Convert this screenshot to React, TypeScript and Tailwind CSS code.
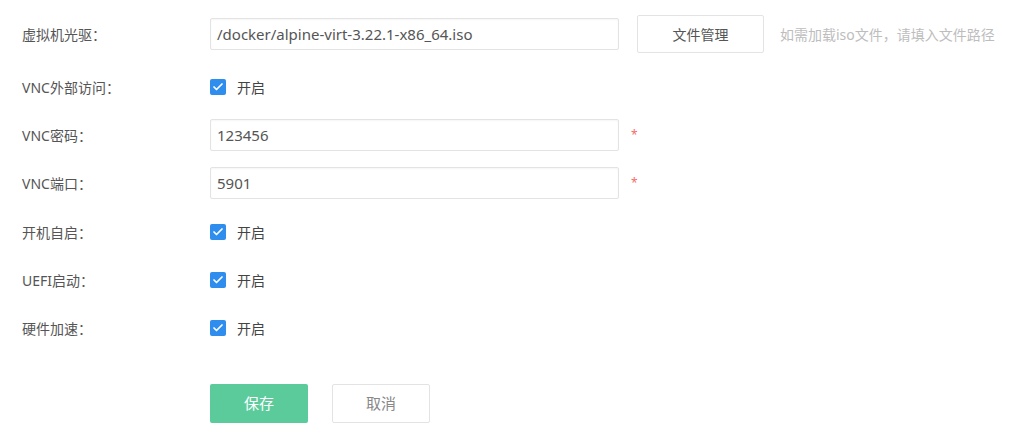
import { Check } from "lucide-react";

const font = { fontFamily: '"Noto Sans", "Noto Sans CJK SC", sans-serif' };

const Label = ({ children }: { children: React.ReactNode }) => (
  <div className="w-[188px] shrink-0 text-[14px] text-[#555]">{children}</div>
);

const TextBox = ({ value }: { value: string }) => (
  <div className="w-[409px] h-8 flex items-center px-[6px] border border-[#e3e3e3] rounded-[2px] text-[15px] text-[#555] bg-white shadow-[inset_0_1px_2px_rgba(0,0,0,0.04)]">
    {value}
  </div>
);

const Toggle = () => (
  <div className="flex items-center gap-[11px]">
    <span className="w-4 h-4 rounded-[2px] bg-[#2e8ded] flex items-center justify-center">
      <Check size={12} strokeWidth={3.5} className="text-white" />
    </span>
    <span className="text-[14px] text-[#444]">开启</span>
  </div>
);

export default function App() {
  return (
    <div className="w-[1024px] h-[436px] bg-white pl-[22px] pt-[15px]" style={font}>
      <div className="flex items-center h-[38px]">
        <Label>虚拟机光驱：</Label>
        <TextBox value="/docker/alpine-virt-3.22.1-x86_64.iso" />
        <button className="ml-[18px] w-[127px] h-[38px] border border-[#e3e3e3] rounded-[2px] text-[14px] text-[#555] bg-white">
          文件管理
        </button>
        <span className="ml-4 text-[14px] text-[#bdbdbd]">如需加载iso文件，请填入文件路径</span>
      </div>
      <div className="flex items-center h-8 mt-[18px]">
        <Label>VNC外部访问：</Label>
        <Toggle />
      </div>
      <div className="flex items-center h-8 mt-4">
        <Label>VNC密码：</Label>
        <TextBox value="123456" />
        <span className="ml-[12px] text-[12px] text-[#f56c6c]">*</span>
      </div>
      <div className="flex items-center h-8 mt-4">
        <Label>VNC端口：</Label>
        <TextBox value="5901" />
        <span className="ml-[12px] text-[12px] text-[#f56c6c]">*</span>
      </div>
      <div className="flex items-center h-8 mt-[17px]">
        <Label>开机自启：</Label>
        <Toggle />
      </div>
      <div className="flex items-center h-8 mt-4">
        <Label>UEFI启动：</Label>
        <Toggle />
      </div>
      <div className="flex items-center h-8 mt-4">
        <Label>硬件加速：</Label>
        <Toggle />
      </div>
      <div className="flex items-center gap-6 mt-10 ml-[188px]">
        <button className="w-[98px] h-[39px] rounded-[2px] bg-[#5ccb9b] text-white text-[15px]">保存</button>
        <button className="w-[98px] h-[39px] rounded-[2px] border border-[#e3e3e3] bg-white text-[#888] text-[15px]">
          取消
        </button>
      </div>
    </div>
  );
}
